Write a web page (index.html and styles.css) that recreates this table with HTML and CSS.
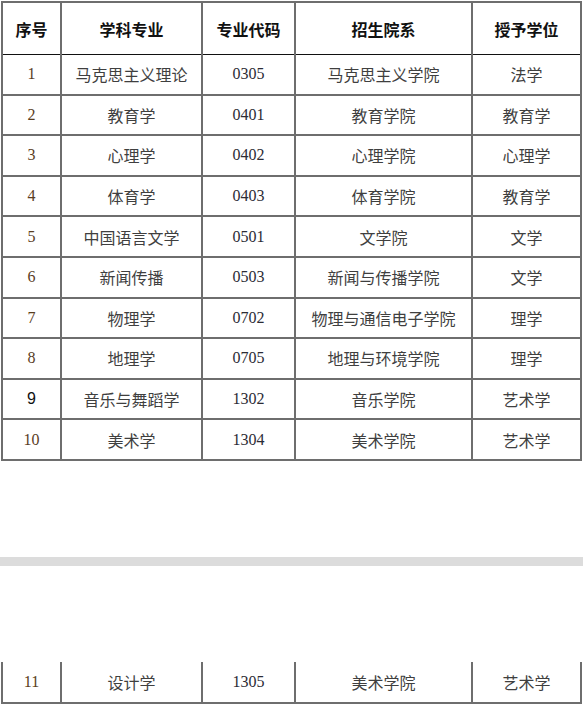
FILE: index.html
```html
<!DOCTYPE html>
<html lang="zh-CN">
<head>
<meta charset="utf-8">
<title>学科专业</title>
<link rel="stylesheet" href="styles.css">
</head>
<body>
<div class="page">
  <table class="grid">
    <colgroup>
      <col class="c1"><col class="c2"><col class="c3"><col class="c4"><col class="c5">
    </colgroup>
    <thead>
      <tr class="head">
        <th>序号</th><th>学科专业</th><th>专业代码</th><th>招生院系</th><th>授予学位</th>
      </tr>
    </thead>
    <tbody>
      <tr class="first"><td class="no">1</td><td>马克思主义理论</td><td class="num">0305</td><td>马克思主义学院</td><td>法学</td></tr>
      <tr><td class="no">2</td><td>教育学</td><td class="num">0401</td><td>教育学院</td><td>教育学</td></tr>
      <tr><td class="no">3</td><td>心理学</td><td class="num">0402</td><td>心理学院</td><td>心理学</td></tr>
      <tr><td class="no">4</td><td>体育学</td><td class="num">0403</td><td>体育学院</td><td>教育学</td></tr>
      <tr><td class="no">5</td><td>中国语言文学</td><td class="num">0501</td><td>文学院</td><td>文学</td></tr>
      <tr><td class="no">6</td><td>新闻传播</td><td class="num">0503</td><td>新闻与传播学院</td><td>文学</td></tr>
      <tr><td class="no">7</td><td>物理学</td><td class="num">0702</td><td>物理与通信电子学院</td><td>理学</td></tr>
      <tr><td class="no">8</td><td>地理学</td><td class="num">0705</td><td>地理与环境学院</td><td>理学</td></tr>
      <tr><td class="no sans">9</td><td>音乐与舞蹈学</td><td class="num">1302</td><td>音乐学院</td><td>艺术学</td></tr>
      <tr><td class="no">10</td><td>美术学</td><td class="num">1304</td><td>美术学院</td><td>艺术学</td></tr>
    </tbody>
  </table>

  <div class="divider"></div>

  <table class="grid cont">
    <colgroup>
      <col class="c1"><col class="c2"><col class="c3"><col class="c4"><col class="c5">
    </colgroup>
    <tbody>
      <tr><td class="no">11</td><td>设计学</td><td class="num">1305</td><td>美术学院</td><td>艺术学</td></tr>
    </tbody>
  </table>
</div>
</body>
</html>
```

FILE: styles.css
```css
html, body {
  margin: 0;
  padding: 0;
  background: #ffffff;
}

.page {
  width: 583px;
  padding-top: 1px;
  font-family: "Liberation Serif", "Noto Sans CJK SC", serif;
  color: #3a3a3a;
}

.grid {
  border-collapse: collapse;
  margin-left: 1px;
  width: 579px;
  table-layout: fixed;
}

.c1 { width: 59px; }
.c2 { width: 141px; }
.c3 { width: 93px; }
.c4 { width: 177px; }
.c5 { width: 109px; }

.grid th,
.grid td {
  border: 2px solid #6e6e6e;
  text-align: center;
  vertical-align: middle;
  padding: 0;
}

.grid th {
  height: 51px;
  font-family: "Noto Sans CJK SC", "Liberation Sans", sans-serif;
  font-weight: 700;
  font-size: 16px;
  color: #111111;
  border-top: 2px solid #6e6e6e;
  border-bottom: 1px solid #111111;
}

.grid .first td {
  border-top: 1px solid #111111;
}

.grid td {
  height: 38.6px;
  font-size: 16px;
  font-family: "Liberation Serif", "Noto Sans CJK SC", serif;
  color: #3f3f3f;
}

.grid td.no {
  color: #5a3d1e;
}

.grid td.sans {
  font-family: "Liberation Sans", sans-serif;
  color: #111111;
}

.grid td.num {
  color: #2b2b35;
}

.divider {
  height: 9px;
  background: #dcdcdc;
  margin-top: 96px;
}

.cont {
  margin-top: 96px;
}

.cont td {
  border-top: none;
  height: 40px;
}

.cont td.no {
  color: #5a4020;
}
```
